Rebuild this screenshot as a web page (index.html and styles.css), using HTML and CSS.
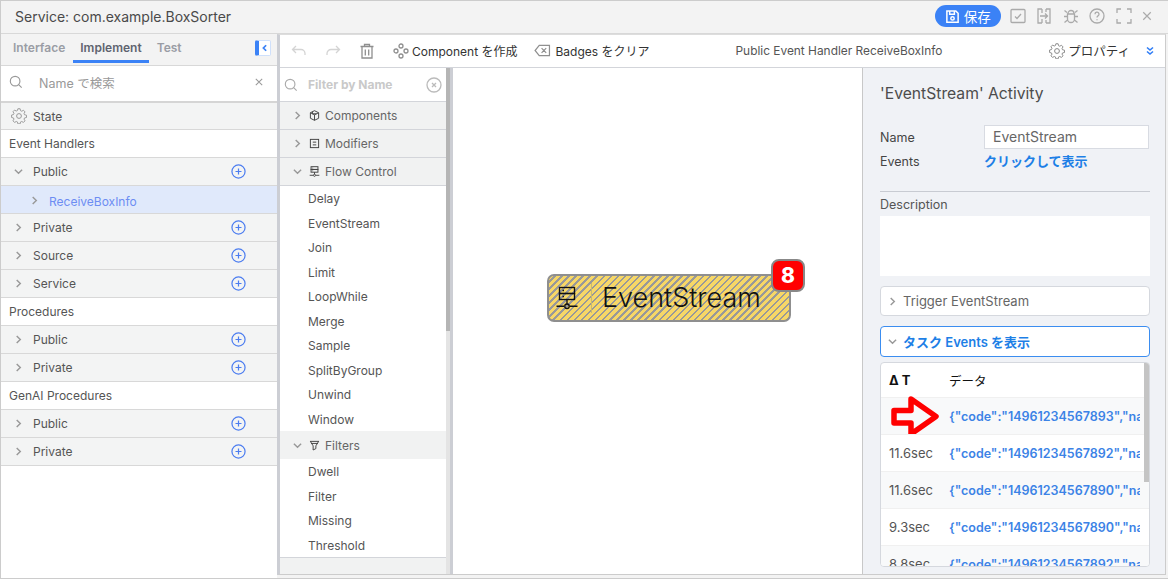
FILE: index.html
```html
<!DOCTYPE html>
<html lang="en">

<head>
    <meta charset="UTF-8">
    <title>Service: com.example.BoxSorter</title>
    <link rel="stylesheet" href="styles.css">
</head>

<body>
    <svg class="defs">
        <defs>
            <symbol id="gear" viewBox="0 0 16 16"><path d="M6.8 1h2.4l.4 2 1.3.6 1.8-1 1.6 1.7-1 1.8.5 1.2 2.1.5v2.4l-2.1.5-.5 1.2 1 1.8-1.6 1.7-1.8-1-1.3.5-.4 2H6.8l-.4-2-1.3-.5-1.8 1-1.6-1.7 1-1.8-.5-1.2-2-.5V7.6l2-.5.5-1.2-1-1.8 1.6-1.7 1.8 1 1.3-.6z" transform="translate(.4 -.2) scale(.95)"/><circle cx="8" cy="8" r="2.4"/></symbol>
            <symbol id="plus" viewBox="0 0 16 16"><circle cx="8" cy="8" r="7"/><path d="M8 4.8v6.4M4.8 8h6.4"/></symbol>
            <symbol id="right" viewBox="0 0 10 10"><path d="M3 1l4 4-4 4"/></symbol>
            <symbol id="down" viewBox="0 0 10 10"><path d="M1 3l4 4 4-4"/></symbol>
            <symbol id="flow" viewBox="0 0 16 16"><rect x="3" y="1" width="10" height="4"/><rect x="3" y="5" width="10" height="4"/><path d="M8 9v3M1 13.500h5M10 13.500h5M5 3h1M5 7h1"/><circle cx="8" cy="13.500" r="1.500"/></symbol>
            <symbol id="search" viewBox="0 0 16 16"><circle cx="7" cy="7" r="5.500"/><path d="M11 11l3.500 3.500"/></symbol>
        </defs>
    </svg>

    <div class="app">
        <header class="titleBar">
            <div class="titleText">Service: com.example.BoxSorter</div>
            <div class="titleActions">
                <button class="saveButton">
                    <svg viewBox="0 0 16 16" class="saveIcon"><path d="M2 2h9.500L14 4.500V14H2z"/><path d="M5 2v3.500h5V2"/><circle cx="8" cy="10" r="1.800"/></svg>
                    保存
                </button>
                <svg viewBox="0 0 16 16" class="titleIcon"><rect x="1" y="1.500" width="14" height="13" rx="1"/><path d="M5 8.500l2 2 4-4.500"/></svg>
                <svg viewBox="0 0 16 16" class="titleIcon"><path d="M6 1H2v14h4M10 1h4v14h-4M6 1v4M6 11v4M10 1v3M10 12v3M4 8h7M9 5.500L11.500 8 9 10.500"/></svg>
                <svg viewBox="0 0 16 16" class="titleIcon"><path d="M5 5.500a3 3 0 0 1 6 0M4.500 6h7v5a3.500 3.500 0 0 1-7 0zM1.500 2.500L4 4.500M14.500 2.500L12 4.500M1 8.500h3.500M15 8.500h-3.500M1.500 14.500L4.500 12M14.500 14.500L11.500 12"/></svg>
                <svg viewBox="0 0 16 16" class="titleIcon"><circle cx="8" cy="8" r="7"/><path d="M6 6.200a2 2 0 1 1 3 1.700c-.7.400-1 .8-1 1.600M8 11.300v1"/></svg>
                <svg viewBox="0 0 16 16" class="titleIcon"><path d="M1 5V1h4M11 1h4v4M15 11v4h-4M5 15H1v-4"/></svg>
                <svg viewBox="0 0 16 16" class="closeIcon"><path d="M3 3l10 10M13 3L3 13"/></svg>
            </div>
        </header>

        <div class="workArea">
            <aside class="leftPanel">
                <div class="tabs">
                    <span class="tab">Interface</span>
                    <span class="tab activeTab">Implement</span>
                    <span class="tab">Test</span>
                    <span class="collapseButton"><svg viewBox="0 0 10 10"><path d="M6.500 2.500L4 5l2.500 2.500"/></svg></span>
                </div>
                <div class="searchBox">
                    <svg class="searchIcon"><use href="#search"/></svg>
                    <span class="searchText">Name で検索</span>
                    <svg viewBox="0 0 10 10" class="clearIcon"><path d="M1 1l8 8M9 1L1 9"/></svg>
                </div>
                <div class="treeRow stateRow"><svg class="gearIcon"><use href="#gear"/></svg>State</div>
                <div class="treeHead">Event Handlers</div>
                <div class="treeRow"><svg class="chevron"><use href="#down"/></svg>Public<svg class="plusIcon"><use href="#plus"/></svg></div>
                <div class="treeRow selectedRow"><svg class="chevron"><use href="#right"/></svg>ReceiveBoxInfo</div>
                <div class="treeRow"><svg class="chevron"><use href="#right"/></svg>Private<svg class="plusIcon"><use href="#plus"/></svg></div>
                <div class="treeRow"><svg class="chevron"><use href="#right"/></svg>Source<svg class="plusIcon"><use href="#plus"/></svg></div>
                <div class="treeRow"><svg class="chevron"><use href="#right"/></svg>Service<svg class="plusIcon"><use href="#plus"/></svg></div>
                <div class="treeHead">Procedures</div>
                <div class="treeRow"><svg class="chevron"><use href="#right"/></svg>Public<svg class="plusIcon"><use href="#plus"/></svg></div>
                <div class="treeRow"><svg class="chevron"><use href="#right"/></svg>Private<svg class="plusIcon"><use href="#plus"/></svg></div>
                <div class="treeHead">GenAI Procedures</div>
                <div class="treeRow"><svg class="chevron"><use href="#right"/></svg>Public<svg class="plusIcon"><use href="#plus"/></svg></div>
                <div class="treeRow"><svg class="chevron"><use href="#right"/></svg>Private<svg class="plusIcon"><use href="#plus"/></svg></div>
            </aside>

            <main class="editor">
                <div class="toolbar">
                    <svg viewBox="0 0 16 16" class="toolIcon faded"><path d="M5 3L1.500 6.500 5 10M2 6.500h8a4 4 0 0 1 4 4V12"/></svg>
                    <svg viewBox="0 0 16 16" class="toolIcon faded"><path d="M11 3l3.500 3.500L11 10M14 6.500H6a4 4 0 0 0-4 4V12"/></svg>
                    <svg viewBox="0 0 16 16" class="toolIcon"><path d="M1.500 3.500h13M5.500 3.500V1.500h5v2M3 3.500V15h10V3.500M6.300 6.500v6M9.700 6.500v6"/></svg>
                    <span class="toolItem componentItem">
                        <svg viewBox="0 0 16 16" class="toolIcon"><circle cx="8" cy="3" r="2"/><circle cx="3" cy="8" r="2"/><circle cx="13" cy="8" r="2"/><circle cx="8" cy="13" r="2"/></svg>
                        Component を作成
                    </span>
                    <span class="toolItem">
                        <svg viewBox="0 0 18 14" class="badgeIcon"><path d="M5.500 1.500h11v11h-11L1 7zM8 4.500l5 5M13 4.500l-5 5"/></svg>
                        Badges をクリア
                    </span>
                    <span class="handlerName">Public Event Handler ReceiveBoxInfo</span>
                    <span class="propsItem"><svg class="gearIcon"><use href="#gear"/></svg>プロパティ</span>
                    <svg viewBox="0 0 10 10" class="propsArrow"><path d="M2 1.500L5 4l3-2.500M2 5.500L5 8l3-2.500"/></svg>
                </div>

                <div class="editorBody">
                    <div class="palette">
                        <div class="paletteList">
                            <div class="paletteSearch">
                                <svg class="paletteSearchIcon"><use href="#search"/></svg>
                                <span>Filter by Name</span>
                                <svg viewBox="0 0 16 16" class="paletteClear"><circle cx="8" cy="8" r="7"/><path d="M6 6l4 4M10 6l-4 4"/></svg>
                            </div>
                            <div class="paletteGroup"><svg class="chevron"><use href="#right"/></svg><svg viewBox="0 0 16 16" class="groupIcon"><path d="M8 1l6 3v8l-6 3-6-3V4zM2 4l6 3 6-3M8 7v8M5 2.500v3l6 0"/></svg>Components</div>
                            <div class="paletteGroup"><svg class="chevron"><use href="#right"/></svg><svg viewBox="0 0 16 16" class="groupIcon"><rect x="2" y="2" width="12" height="12"/><path d="M5.500 6h5M5.500 10h5"/></svg>Modifiers</div>
                            <div class="paletteGroup"><svg class="chevron"><use href="#down"/></svg><svg class="groupIcon"><use href="#flow"/></svg>Flow Control</div>
                            <div class="paletteItem">Delay</div>
                            <div class="paletteItem">EventStream</div>
                            <div class="paletteItem">Join</div>
                            <div class="paletteItem">Limit</div>
                            <div class="paletteItem">LoopWhile</div>
                            <div class="paletteItem">Merge</div>
                            <div class="paletteItem">Sample</div>
                            <div class="paletteItem">SplitByGroup</div>
                            <div class="paletteItem">Unwind</div>
                            <div class="paletteItem">Window</div>
                            <div class="paletteGroup plainGroup"><svg class="chevron"><use href="#down"/></svg><svg viewBox="0 0 16 16" class="groupIcon"><path d="M1.500 2h13M3 5h10M6 8.500v6l4-2v-4M2 2l4 6.500M14 2l-4 6.500"/></svg>Filters</div>
                            <div class="paletteItem">Dwell</div>
                            <div class="paletteItem">Filter</div>
                            <div class="paletteItem">Missing</div>
                            <div class="paletteItem">Threshold</div>
                            <div class="paletteGroup cutGroup"></div>
                        </div>
                        <div class="paletteScroll"><div class="paletteThumb"></div></div>
                    </div>

                    <div class="canvas">
                        <div class="node">
                            <svg class="nodeIcon"><use href="#flow"/></svg>
                            <span class="nodeLabel">EventStream</span>
                            <span class="nodeBadge">8</span>
                        </div>
                    </div>

                    <div class="props">
                        <h2 class="propsTitle">'EventStream' Activity</h2>
                        <div class="propsField">
                            <label>Name</label>
                            <div class="nameInput">EventStream</div>
                        </div>
                        <div class="propsField eventsField">
                            <label>Events</label>
                            <a class="linkText">クリックして表示</a>
                        </div>
                        <div class="descBlock">
                            <div class="descLabel">Description</div>
                            <div class="descBox"></div>
                        </div>
                        <div class="accordion"><svg class="chevron"><use href="#right"/></svg>Trigger EventStream</div>
                        <div class="accordion openAccordion"><svg class="chevron"><use href="#down"/></svg>タスク Events を表示</div>
                        <div class="eventsTable">
                            <div class="eventsHead"><span class="deltaCol">Δ T</span><span>データ</span></div>
                            <div class="eventsRow shaded">
                                <span class="deltaCol"></span><span class="eventData">{"code":"14961234567893","name":"box"}</span>
                                <svg viewBox="0 0 50 43" class="redArrow"><path d="M3 15.500H20V4l25 17.500L20 39V28H3z"/></svg>
                            </div>
                            <div class="eventsRow"><span class="deltaCol">11.6sec</span><span class="eventData">{"code":"14961234567892","name":"box"}</span></div>
                            <div class="eventsRow shaded"><span class="deltaCol">11.6sec</span><span class="eventData">{"code":"14961234567890","name":"box"}</span></div>
                            <div class="eventsRow"><span class="deltaCol">9.3sec</span><span class="eventData">{"code":"14961234567890","name":"box"}</span></div>
                            <div class="eventsRow shaded"><span class="deltaCol">8.8sec</span><span class="eventData">{"code":"14961234567892","name":"box"}</span></div>
                            <div class="eventsScroll"></div>
                        </div>
                    </div>
                </div>
            </main>
        </div>
    </div>
</body>

</html>
```

FILE: styles.css
```css
* {
    margin: 0;
    padding: 0;
    box-sizing: border-box;
}

html,
body {
    width: 100%;
    height: 100%;
    overflow: hidden;
}

body {
    font-family: Inter, "Noto Sans CJK JP", sans-serif;
    font-size: 12px;
    color: #444;
    background-color: #fff;
}

.defs {
    position: absolute;
    width: 0;
    height: 0;
}

svg {
    fill: none;
    stroke: currentColor;
    stroke-width: 1.3;
    flex-shrink: 0;
}

.app {
    width: 1168px;
    height: 579px;
    display: flex;
    flex-direction: column;
    background-color: #f3f3f3;
    border-top: 1px solid #ccc;
    border-bottom: 1px solid #ccc;
    border-left: 1px solid #ccc;
}

.titleBar {
    height: 33px;
    flex-shrink: 0;
    display: flex;
    align-items: center;
    justify-content: space-between;
    padding: 0 15px 2px 14px;
    border-bottom: 1px solid #d8d8d8;
}

.titleText {
    font-size: 14px;
    color: #4a4a4a;
}

.titleActions {
    display: flex;
    align-items: center;
    gap: 10.400px;
    color: #aaa;
}

.saveButton {
    height: 22px;
    width: 66px;
    display: flex;
    align-items: center;
    justify-content: center;
    gap: 4px;
    border: none;
    border-radius: 11px;
    background-color: #3b82f6;
    color: #fff;
    font-family: inherit;
    font-size: 13.5px;
    margin-right: -1px;
}

.saveIcon {
    width: 15px;
    height: 15px;
    stroke-width: 1.6;
}

.titleIcon {
    width: 16px;
    height: 16px;
}

.closeIcon {
    width: 12px;
    height: 12px;
    margin-left: -1px;
    stroke-width: 1.6;
}

.workArea {
    flex: 1;
    min-height: 0;
    display: flex;
}

.leftPanel {
    width: 276px;
    flex-shrink: 0;
    background-color: #fff;
}

.tabs {
    height: 31px;
    display: flex;
    align-items: flex-start;
    padding-left: 5px;
    background-color: #f3f3f3;
    position: relative;
}

.tab {
    height: 29px;
    display: flex;
    align-items: center;
    padding: 0 7px 3px;
    margin-right: 1px;
    font-weight: 600;
    font-size: 12px;
    color: #9a9da5;
}

.activeTab {
    color: #5f6470;
    padding-bottom: 0;
    border-bottom: 3px solid #3b82f6;
}

.collapseButton {
    position: absolute;
    right: 6px;
    top: 6px;
    width: 16px;
    height: 16px;
    border-radius: 2px;
    background-color: #fff;
    border: 1px solid #cfe0fb;
    border-left: 4px solid #3b82f6;
    color: #3b82f6;
    display: flex;
}

.collapseButton svg {
    width: 11px;
    height: 14px;
    stroke-width: 1.6;
}

.searchBox {
    height: 36px;
    display: flex;
    align-items: center;
    background-color: #fff;
    padding: 0 14px 3px 8px;
    border-top: 1px solid #d8d8d8;
    color: #999;
}

.searchIcon {
    width: 14px;
    height: 14px;
}

.searchText {
    margin-left: 16px;
    flex: 1;
    font-size: 12.5px;
    color: #999;
}

.clearIcon {
    width: 8px;
    height: 8px;
}

.treeRow {
    height: 28px;
    display: flex;
    align-items: center;
    padding: 0 0 1px 13px;
    background-color: #f3f4f4;
    border-bottom: 1px solid #d8d8d8;
    color: #555;
}

.treeRow .chevron {
    margin-right: 10px;
}

.stateRow {
    height: 29px;
    padding: 0 0 0 10px;
    border-top: 2px solid #d5d5d5;
}

.stateRow .gearIcon {
    margin-right: 6px;
    color: #999;
}

.gearIcon {
    width: 16px;
    height: 16px;
    stroke-width: 1;
}

.selectedRow {
    padding: 3px 0 0 29px;
    background-color: #e0e9fb;
    color: #6d8df3;
}

.selectedRow .chevron {
    margin-right: 10px;
    margin-top: -1px;
}

.treeHead {
    height: 28px;
    display: flex;
    align-items: center;
    padding-left: 8px;
    background-color: #fff;
    border-bottom: 1px solid #d8d8d8;
    color: #555;
}

.chevron {
    width: 9px;
    height: 9px;
    color: #999;
    stroke-width: 1.6;
}

.plusIcon {
    width: 15px;
    height: 15px;
    margin: 1px 31px 0 auto;
    color: #4c7df0;
}

.editor {
    flex: 1;
    min-width: 0;
    display: flex;
    flex-direction: column;
    margin: 0 2px 3px 0;
    border-left: 3px solid #ccced4;
    border-right: 1px solid #ccc;
    border-bottom: 1px solid #ccc;
    border-top: 1px solid #ddd;
    background-color: #fff;
}

.toolbar {
    height: 33px;
    flex-shrink: 0;
    display: flex;
    align-items: center;
    padding: 0 0 1px 11px;
    border-bottom: 1px solid #d3d5da;
    color: #333;
}

.toolIcon {
    width: 16px;
    height: 16px;
    color: #8f8f8f;
    margin-right: 18px;
}

.toolIcon.faded {
    color: #d4d4d4;
}

.toolIcon:nth-child(3) {
    margin-right: 0;
}

.toolItem {
    display: flex;
    align-items: center;
    font-size: 12px;
    margin-left: 16px;
}

.toolItem .toolIcon {
    margin-right: 3px;
}

.componentItem {
    margin-left: 18px;
}

.badgeIcon {
    width: 17px;
    height: 13px;
    color: #8f8f8f;
    margin-right: 5px;
}

.handlerName {
    margin-left: 86px;
    font-size: 11.900px;
    color: #555;
    white-space: nowrap;
}

.propsItem {
    margin-left: auto;
    display: flex;
    align-items: center;
    gap: 3px;
    font-size: 12.5px;
}

.propsItem .gearIcon {
    color: #888;
}

.propsArrow {
    width: 10px;
    height: 10px;
    margin: 0 10px 0 15px;
    color: #2f7df6;
    stroke-width: 1.6;
}

.editorBody {
    flex: 1;
    min-height: 0;
    display: flex;
}

.palette {
    width: 173px;
    flex-shrink: 0;
    display: flex;
    overflow: hidden;
    border-right: 3px solid #ccced4;
}

.paletteList {
    flex: 1;
    min-width: 0;
    overflow: hidden;
}

.paletteScroll {
    width: 4px;
    flex-shrink: 0;
    background-color: #e4e4e4;
}

.paletteThumb {
    width: 100%;
    height: 263px;
    background-color: #b5b5b5;
}

.paletteSearch {
    height: 34px;
    display: flex;
    align-items: center;
    padding-left: 4px;
    border-bottom: 1px solid #d3d5da;
    color: #c9c9c9;
    font-weight: 700;
    font-size: 12px;
}

.paletteSearchIcon {
    width: 14px;
    height: 14px;
    margin-right: 10px;
    color: #aaa;
}

.paletteClear {
    width: 16px;
    height: 16px;
    margin-left: auto;
    margin-right: 4px;
    color: #bbb;
}

.paletteGroup {
    height: 28px;
    display: flex;
    align-items: center;
    padding-left: 13px;
    background-color: #f1f2f2;
    border-bottom: 1px solid #d3d5da;
    color: #666;
}

.paletteGroup .chevron {
    margin-right: 7px;
}

.groupIcon {
    width: 11px;
    height: 11px;
    margin-right: 5px;
    color: #444;
    stroke-width: 1.400;
}

.plainGroup {
    border-bottom: 0;
}

.cutGroup {
    border-top: 1px solid #d3d5da;
    border-bottom: 0;
}

.paletteItem {
    height: 24.5px;
    display: flex;
    align-items: center;
    padding: 0.5px 0 0 28px;
    background-color: #fff;
    color: #555;
}

.canvas {
    flex: 1;
    min-width: 0;
    border-right: 1px solid #c8c8c8;
    position: relative;
    background-color: #fff;
}

.node {
    position: absolute;
    left: 94px;
    top: 206px;
    width: 244px;
    height: 48px;
    display: flex;
    align-items: center;
    border: 2px solid #8f8f8f;
    border-radius: 7px;
    color: #111;
    background-image: repeating-linear-gradient(135deg, #f7d766 0, #f7d766 3.200px, #999 3.200px, #999 5px);
}

.nodeIcon {
    width: 24px;
    height: 24px;
    margin-left: 6px;
    stroke-width: 0.9;
}

.nodeLabel {
    margin-left: 12px;
    padding-left: 10px;
    border-left: 1px solid #c8b870;
    font-size: 27px;
    font-weight: 300;
    line-height: 30px;
}

.nodeBadge {
    position: absolute;
    right: -16px;
    top: -17px;
    width: 34px;
    height: 33px;
    display: flex;
    align-items: center;
    justify-content: center;
    border: 2px solid #888;
    border-radius: 8px;
    background-color: #f00;
    color: #fff;
    font-size: 21px;
    font-weight: 800;
}

.props {
    width: 302px;
    flex-shrink: 0;
    padding: 0 15px 0 17px;
    background-color: #f0f2f6;
    overflow: hidden;
    font-size: 12.5px;
}

.propsTitle {
    margin-top: 16px;
    height: 20px;
    font-size: 15.700px;
    font-weight: 400;
    color: #4c4c4c;
}

.propsField {
    display: flex;
    align-items: center;
    margin-top: 21px;
    height: 24px;
    color: #444;
}

.propsField label {
    width: 104px;
}

.nameInput {
    width: 165px;
    height: 24px;
    padding-left: 8px;
    line-height: 22px;
    font-size: 14px;
    color: #666;
    background-color: #fff;
    border: 1px solid #d8dbe2;
}

.eventsField {
    margin-top: 0;
}

.linkText {
    color: #1d7fe6;
    font-weight: 600;
    font-size: 13px;
    margin-bottom: 1px;
}

.descBlock {
    margin-top: 18px;
    padding-top: 5px;
    border-top: 1px solid #c8cbd2;
}

.descLabel {
    color: #555;
}

.descBox {
    height: 60px;
    margin-top: 4px;
    background-color: #fff;
}

.accordion {
    height: 30px;
    margin-top: 10px;
    display: flex;
    align-items: center;
    padding-left: 7px;
    background-color: #fff;
    border: 1px solid #d5d8de;
    border-radius: 4px;
    font-size: 13px;
    color: #666;
}

.accordion .chevron {
    margin-right: 6px;
}

.openAccordion {
    height: 31px;
    padding-bottom: 1px;
    border-color: #3b8df0;
    color: #1d7fe6;
    font-weight: 600;
    font-size: 13px;
}

.eventsTable {
    position: relative;
    height: 205px;
    margin-top: 5px;
    background-color: #fff;
    border: 1px solid #d5d8de;
    border-radius: 4px;
    overflow: hidden;
}

.eventsHead {
    height: 34px;
    display: flex;
    align-items: center;
    padding-left: 8px;
    color: #111;
    font-size: 12.5px;
}

.eventsHead .deltaCol {
    font-weight: 700;
}

.deltaCol {
    width: 60px;
    flex-shrink: 0;
    font-size: 13px;
}

.eventsRow {
    position: relative;
    height: 37px;
    display: flex;
    align-items: center;
    padding: 0 9px 0 8px;
    border-top: 1px solid #f0f0f0;
    background-color: #fff;
    color: #555;
}

.shaded {
    background-color: #f8f9fa;
}

.eventData {
    min-width: 0;
    margin-top: 1px;
    white-space: nowrap;
    overflow: hidden;
    color: #3c83e6;
    font-weight: 600;
    font-size: 12.500px;
}

.redArrow {
    position: absolute;
    left: 10px;
    top: -3px;
    width: 50px;
    height: 43px;
    stroke: #f00;
    stroke-width: 5.500;
    stroke-linejoin: round;
}

.eventsScroll {
    position: absolute;
    right: 0;
    top: 0;
    width: 5px;
    height: 119px;
    background-color: #c4c4c4;
}
```
